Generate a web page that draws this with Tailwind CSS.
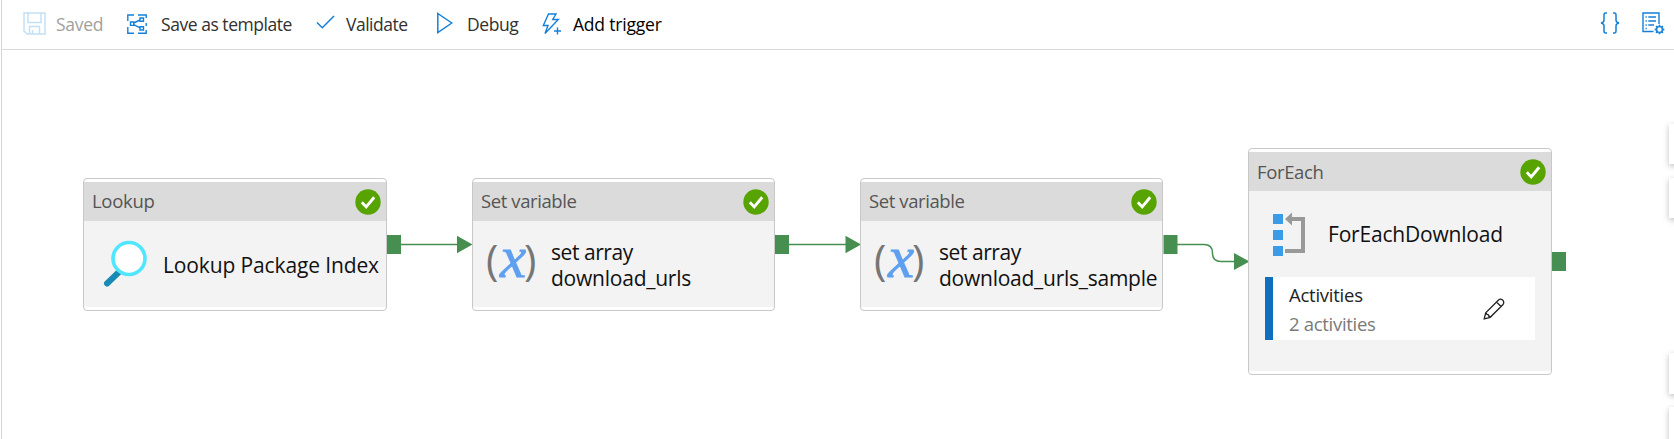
<!DOCTYPE html>
<html lang="en">
<head>
<meta charset="utf-8">
<title>Pipeline</title>
<script src="https://cdn.jsdelivr.net/npm/@tailwindcss/browser@4"></script>
</head>
<body class="bg-white">
<svg class="hidden">
  <symbol id="ok" viewBox="0 0 26 26"><circle cx="13" cy="13" r="12.7" fill="#57a300"/><path d="M6.8 13.3l4.4 4.6 8-9.6" fill="none" stroke="#fff" stroke-width="2.9"/></symbol>
</svg>
<div class="relative flex h-[439px] w-[1674px] flex-col overflow-hidden font-['Open_Sans',sans-serif]">
  <div class="absolute left-px top-0 h-full w-px bg-[#d6d6d6]"></div>
  <header class="ml-0.5 flex h-[50px] shrink-0 items-center border-b border-[#dadada] text-[17.5px] leading-6 text-[#323130]">
    <svg class="-mt-0.5 ml-[21px] size-[23px] shrink-0" viewBox="0 0 23 23" fill="none" stroke="#c3dff5" stroke-width="1.5"><path d="M1 1h21v21H4l-3-3zM5 1v9.5h13V1M6.5 22v-7.500h10V22M9.500 18v4"/></svg>
    <div class="-mt-0.5 ml-2.5 w-[71px]"><span class="whitespace-nowrap tracking-[-0.3px] text-[#a19f9d]">Saved</span></div>
    <svg class="-mt-0.5 size-5 shrink-0" viewBox="0 0 20 20" fill="none" stroke="#1480d8" stroke-width="1.4"><path d="M7 1H.8v6M.8 13v6.200H7M11 1h8.200v3M19.200 16v3.200H11M19.200 9v3M3.500 8h3.200v3.400H3.500zM13 4h3.500v3.300H13zM13 12.700h3.500V16H13zM6.700 9l6.300-3M6.700 10.600l6.300 3.200"/></svg>
    <div class="-mt-0.5 ml-[14px] w-[155px]"><span class="whitespace-nowrap tracking-[-0.46px]">Save as template</span></div>
    <svg class="-mt-[5px] h-4 w-[19px] shrink-0" viewBox="0 0 19 16" fill="none" stroke="#1480d8" stroke-width="1.5"><path d="M1 8.500l5.300 5.300L18 2"/></svg>
    <div class="-mt-0.5 ml-[11px] w-[90px]"><span class="whitespace-nowrap tracking-[-0.5px]">Validate</span></div>
    <svg class="-mt-1 h-[22px] w-[17px] shrink-0" viewBox="0 0 17 22" fill="none" stroke="#1480d8" stroke-width="1.5"><path d="M1.800 1.500l14 9.500-14 9.500z"/></svg>
    <div class="-mt-0.5 ml-[14px] w-[75px]"><span class="whitespace-nowrap tracking-[-0.4px]">Debug</span></div>
    <svg class="-mt-0.5 h-[22px] w-5 shrink-0" viewBox="0 0 20 22" fill="none" stroke="#1480d8" stroke-width="1.4"><path d="M6.500 1h7.500l-3.300 5.500h5.600L3 20.500l3-8H1.300zM15.500 14.500v7M12 18h7"/></svg>
    <div class="-mt-0.5 ml-[11px] w-[100px]"><span class="whitespace-nowrap tracking-[-0.2px] text-black">Add trigger</span></div>
    <div class="ml-auto mr-[9px] flex items-center gap-[22px]">
      <svg class="-mt-1 h-[22px] w-5" viewBox="0 0 20 22" fill="none" stroke="#1480d8" stroke-width="1.500"><path d="M7 1H5.500Q4 1 4 3v5Q4 10.500 1 11q3 .5 3 3v5q0 2 1.500 2H7M13 1h1.500Q16 1 16 3v5q0 2.500 3 3-3 .5-3 3v5q0 2-1.500 2H13"/></svg>
      <svg class="-mt-0.5 h-[23px] w-[23px]" viewBox="0 0 23 23" fill="none" stroke="#1480d8" stroke-width="1.400"><path d="M11.500 19.500H1V1h16v11M3.500 5h1.300M6.300 5H14M3.500 9h1.300M6.300 9H14M3.500 13h1.300M6.300 13H12M3.500 16.500h1.300"/><circle cx="17.500" cy="17.500" r="2.900"/><path d="M17.500 12.700v2M17.500 20.300v2M12.700 17.500h2M20.300 17.500h2M14.100 14.100l1.400 1.400M19.500 19.500l1.400 1.400M14.100 20.900l1.400-1.400M19.500 15.500l1.400-1.400" stroke-width="1.800"/></svg>
    </div>
  </header>

  <main class="grow">
    <svg class="absolute left-0 top-0 h-[439px] w-[1674px]" fill="none" stroke="#468f50" stroke-width="1.500">
      <path d="M400 244.500h60M789 244.500h59M1177 244.500h27q8.500 0 8.500 8.500t8.500 8.500h16"/>
      <path d="M457 235.700l15.500 8.800-15.500 8.800zM845.500 235.700l15.500 8.800-15.500 8.800zM1234 253l15.500 8.500-15.500 8.500z" fill="#468f50" stroke="none"/>
      <path d="M387 235h14v19h-14zM775 235h14v19h-14zM1163.500 235h14v19h-14zM1552 252h14v19h-14z" fill="#468f50" stroke="none"/>
    </svg>

    <section class="absolute left-[83px] top-[178px] flex h-[133px] w-[304px] flex-col rounded border-[1.5px] border-[#c8c8c8] bg-white py-[3px]">
      <div class="flex h-[39px] shrink-0 items-center justify-between bg-[#dbdbdb] pl-2 pr-[5px]"><span class="-mt-px whitespace-nowrap text-[18.5px] tracking-[-0.3px] text-[#555]">Lookup</span><svg class="size-[26px]"><use href="#ok"/></svg></div>
      <div class="flex grow items-center bg-[#f3f3f3] pl-[19px]">
        <svg class="h-[48px] w-[44px] shrink-0" viewBox="0 0 44 48"><path d="M4 43.500L16 32" stroke="#198ab3" stroke-width="6" stroke-linecap="round"/><circle cx="26" cy="18.500" r="16" fill="#fff" stroke="#50e6ff" stroke-width="3.600"/></svg>
        <span class="ml-4 mt-[3px] whitespace-nowrap text-[21px] tracking-[-0.13px] text-[#111]">Lookup Package Index</span>
      </div>
    </section>

    <section class="absolute left-[472px] top-[178px] flex h-[133px] w-[303px] flex-col rounded border-[1.5px] border-[#c8c8c8] bg-white py-[3px]">
      <div class="flex h-[39px] shrink-0 items-center justify-between bg-[#dbdbdb] pl-2 pr-[5px]"><span class="-mt-px whitespace-nowrap text-[18.5px] tracking-[-0.4px] text-[#555]">Set variable</span><svg class="size-[26px]"><use href="#ok"/></svg></div>
      <div class="flex grow items-center bg-[#f3f3f3] pl-[14px]">
        <svg class="h-[44px] w-[50px] shrink-0 overflow-visible" viewBox="0 0 50 44"><g fill="#767676" font-family="Open Sans" font-size="42"><text x="-1" y="33">(</text><text x="37" y="33">)</text></g><text x="13" y="35" font-family="Liberation Serif" font-style="italic" font-size="59" fill="#5ea0ef" stroke="#5ea0ef" stroke-width=".8">x</text></svg>
        <div class="ml-[14px] mt-0.5 text-[21px] leading-[26px] text-[#111]"><div><span class="whitespace-nowrap tracking-[-0.45px]">set array</span></div><div><span class="whitespace-nowrap tracking-[-0.23px]">download_urls</span></div></div>
      </div>
    </section>

    <section class="absolute left-[860px] top-[178px] flex h-[133px] w-[303px] flex-col rounded border-[1.5px] border-[#c8c8c8] bg-white py-[3px]">
      <div class="flex h-[39px] shrink-0 items-center justify-between bg-[#dbdbdb] pl-2 pr-[5px]"><span class="-mt-px whitespace-nowrap text-[18.5px] tracking-[-0.4px] text-[#555]">Set variable</span><svg class="size-[26px]"><use href="#ok"/></svg></div>
      <div class="flex grow items-center bg-[#f3f3f3] pl-[14px]">
        <svg class="h-[44px] w-[50px] shrink-0 overflow-visible" viewBox="0 0 50 44"><g fill="#767676" font-family="Open Sans" font-size="42"><text x="-1" y="33">(</text><text x="37" y="33">)</text></g><text x="13" y="35" font-family="Liberation Serif" font-style="italic" font-size="59" fill="#5ea0ef" stroke="#5ea0ef" stroke-width=".8">x</text></svg>
        <div class="ml-[14px] mt-0.5 text-[21px] leading-[26px] text-[#111]"><div><span class="whitespace-nowrap tracking-[-0.45px]">set array</span></div><div><span class="whitespace-nowrap tracking-[-0.25px]">download_urls_sample</span></div></div>
      </div>
    </section>

    <section class="absolute left-[1248px] top-[148px] flex h-[227px] w-[304px] flex-col rounded border-[1.5px] border-[#c8c8c8] bg-white py-[3px]">
      <div class="flex h-[39px] shrink-0 items-center justify-between bg-[#dbdbdb] pl-2 pr-[5px]"><span class="whitespace-nowrap text-[18.5px] tracking-[-0.35px] text-[#555]">ForEach</span><svg class="size-[26px]"><use href="#ok"/></svg></div>
      <div class="grow bg-[#f3f3f3]">
        <div class="flex h-[86px] items-center pl-6">
          <svg class="-mt-px h-[44px] w-8 shrink-0" viewBox="0 0 32 44"><path d="M0 2h10v10H0zM0 18h10v10H0zM0 34h10v10H0z" fill="#3a9be6"/><path d="M12 7l7-6.500V5h13v36H12v-4h16V9h-9v4.500z" fill="#999"/></svg>
          <span class="ml-[23px] mt-0.5 whitespace-nowrap text-[21px] tracking-[-0.2px] text-[#111]">ForEachDownload</span>
        </div>
        <div class="ml-4 flex h-[63px] w-[270px] items-center border-l-8 border-[#106ebe] bg-white pl-4 text-[18.500px] leading-[29px]">
          <div class="text-[#222]"><div><span class="whitespace-nowrap tracking-[-0.25px]">Activities</span></div><div class="text-[#7a7a7a]"><span class="whitespace-nowrap tracking-[-0.3px]">2 activities</span></div></div>
          <svg class="ml-auto mr-[30px] size-[22px]" viewBox="0 0 22 22" fill="none" stroke="#222" stroke-width="1.300"><path d="M1.200 20.800l1.500-6L15.300 2.200a3 3 0 0 1 4.500 4.500L7.200 19.300zM13.500 4l4.500 4.500M2.700 14.800q1 .2 1.200 1.500 1.800 0 1.800 1.700 1.300.3 1.500 1.300"/></svg>
        </div>
      </div>
    </section>

    <div class="absolute left-[1669px] top-[124px] h-10 w-10 bg-white shadow-[0_2px_6px_rgba(0,0,0,0.25)]"></div>
    <div class="absolute left-[1669px] top-[178px] h-10 w-10 bg-white shadow-[0_2px_6px_rgba(0,0,0,0.25)]"></div>
    <div class="absolute left-[1669px] top-[353px] h-[41px] w-10 bg-white shadow-[0_2px_6px_rgba(0,0,0,0.25)]"></div>
    <div class="absolute left-[1669px] top-[407px] h-10 w-10 bg-white shadow-[0_2px_6px_rgba(0,0,0,0.25)]"></div>
  </main>
</div>
</body>
</html>
